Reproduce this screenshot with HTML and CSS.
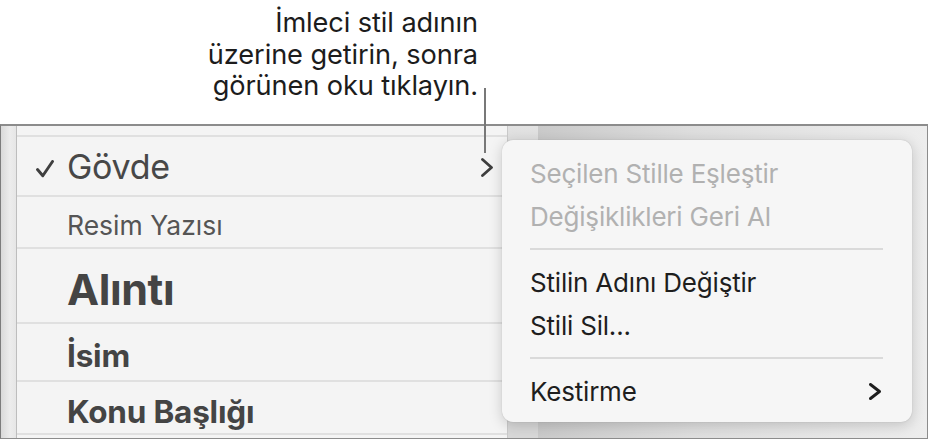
FILE: index.html
```html
<!DOCTYPE html>
<html lang="tr">
<head>
<meta charset="utf-8">
<title>Stil menüsü</title>
<link rel="stylesheet" href="styles.css">
</head>
<body>
<div class="page">
  <div class="callout">
    <p>İmleci stil adının<br>üzerine getirin, sonra<br>görünen oku tıklayın.</p>
  </div>
  <div class="frame">
    <div class="gutter"></div>
    <div class="list">
      <div class="row row-cap"></div>
      <div class="row row-body">
        <span class="mark"><svg width="18" height="18" viewBox="0 0 18 18"><path d="M1.5 9.5 L6.8 15.8 L16.5 1.5" fill="none" stroke="#3f3f3f" stroke-width="2.9" stroke-linecap="round" stroke-linejoin="round"/></svg></span>
        <span class="name name-body">Gövde</span>
        <svg class="chev" width="12" height="19" viewBox="0 0 12 19"><path d="M1.5 1.5 L10.5 9.5 L1.5 17.5" fill="none" stroke="#3e3e3e" stroke-width="2.8" stroke-linecap="round" stroke-linejoin="round"/></svg>
      </div>
      <div class="row row-caption"><span class="mark"></span><span class="name name-caption">Resim Yazısı</span></div>
      <div class="row row-quote"><span class="mark"></span><span class="name name-quote">Alıntı</span></div>
      <div class="row row-name"><span class="mark"></span><span class="name name-bold">İsim</span></div>
      <div class="row row-topic"><span class="mark"></span><span class="name name-bold">Konu Başlığı</span></div>
      <div class="row-rest"></div>
    </div>
    <div class="strip"></div>
    <div class="canvas"></div>
    <div class="menu">
      <div class="item disabled">Seçilen Stille Eşleştir</div>
      <div class="item disabled">Değişiklikleri Geri Al</div>
      <div class="sep"></div>
      <div class="item">Stilin Adını Değiştir</div>
      <div class="item">Stili Sil...</div>
      <div class="sep"></div>
      <div class="item item-sub">Kestirme
        <svg class="chev-sub" width="12" height="17" viewBox="0 0 12 17"><path d="M1.5 1.5 L10.5 8.5 L1.5 15.5" fill="none" stroke="#1e1e1e" stroke-width="2.9" stroke-linecap="round" stroke-linejoin="round"/></svg>
      </div>
    </div>
  </div>
  <div class="leader"></div>
</div>
</body>
</html>
```

FILE: styles.css
```css
html, body {
  margin: 0;
  padding: 0;
  background: #ffffff;
}

body {
  width: 928px;
  height: 439px;
  overflow: hidden;
  font-family: Inter, "Noto Sans", "Liberation Sans", sans-serif;
}

.page {
  position: relative;
  width: 928px;
  height: 439px;
}

.callout {
  height: 124px;
  box-sizing: border-box;
  display: flex;
  justify-content: flex-end;
  padding-right: 450px;
}

.callout p {
  margin: 0;
  padding-top: 7px;
  text-align: right;
  font-size: 27.2px;
  line-height: 31.5px;
  color: #1c1c1c;
  letter-spacing: -0.1px;
}

.leader {
  position: absolute;
  left: 484px;
  top: 88px;
  width: 2px;
  height: 65px;
  background: #787878;
}

.frame {
  position: relative;
  box-sizing: border-box;
  height: 315px;
  border-top: 2px solid #8c8c8c;
  border-left: 1px solid #7c7c7c;
  border-right: 1px solid #8c8c8c;
  border-bottom: 1px solid #8c8c8c;
  display: flex;
}

.gutter {
  width: 15px;
  background: linear-gradient(to right, #d9d9d9, #ececec 60%, #e6e6e6);
  border-right: 1px solid #bdbdbd;
}

.list {
  width: 490px;
  background: #f4f4f4;
  border-right: 1px solid #cacaca;
  display: flex;
  flex-direction: column;
}

.row {
  box-sizing: border-box;
  display: flex;
  align-items: center;
  padding-left: 19px;
  padding-right: 14px;
  border-bottom: 2px solid #e0e0e0;
  color: #474747;
}

.row-cap { height: 11px; }
.row-body { height: 60px; }
.row-caption { height: 52px; padding-top: 5px; }
.row-quote { height: 75px; padding-top: 6px; }
.row-name { height: 58px; padding-top: 6px; }
.row-topic { height: 53px; padding-top: 8px; }
.row-rest { flex: 1; }

.mark {
  width: 31px;
  flex: none;
  display: flex;
  align-items: center;
  margin-top: 5px;
}

.name {
  white-space: nowrap;
}

.name-body {
  font-size: 34px;
  letter-spacing: -0.3px;
}

.name-caption {
  font-size: 26.5px;
  letter-spacing: 0;
  color: #555555;
}

.name-quote {
  font-size: 43px;
  font-weight: 700;
  letter-spacing: -0.4px;
  color: #444444;
}

.name-bold {
  font-size: 31.5px;
  font-weight: 700;
  letter-spacing: -0.2px;
  color: #444444;
}

.chev {
  margin-left: auto;
  margin-top: 2px;
}

.strip {
  width: 30px;
  background: linear-gradient(to bottom, #e2e2e2, #d8d8d8 20%, #d8d8d8);
}

.canvas {
  flex: 1;
  background: linear-gradient(to right, #cacaca, #dedede 40%, #ededed);
}

.menu {
  position: absolute;
  left: 501px;
  top: 14px;
  width: 410px;
  height: 282px;
  box-sizing: border-box;
  padding-top: 12px;
  background: #f6f6f6;
  border-radius: 11px;
  box-shadow: 0 3px 14px rgba(0, 0, 0, 0.18), 0 0 1px rgba(0, 0, 0, 0.25);
}

.item {
  height: 43px;
  display: flex;
  align-items: center;
  padding-left: 28px;
  padding-right: 31px;
  font-size: 26px;
  letter-spacing: -0.2px;
  color: #1e1e1e;
  white-space: nowrap;
}

.item.disabled {
  color: #b1b1b1;
}

.item-sub {
  justify-content: space-between;
}

.sep {
  height: 2px;
  margin: 10px 29px 11px 28px;
  background: #dadada;
}
```
